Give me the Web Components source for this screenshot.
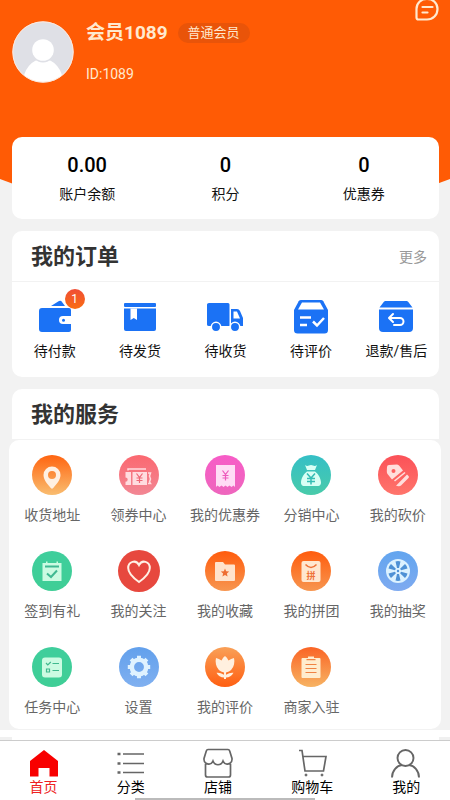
<!DOCTYPE html>
<html lang="zh-CN">
<head>
<meta charset="utf-8">
<meta name="viewport" content="width=device-width, initial-scale=1">
<title>会员中心</title>
<style>
  html, body { margin: 0; }
  body {
    min-height: 100vh; display: flex; flex-direction: column;
    background: #f2f2f2; color: #111;
    font: 14px/20px Roboto, "Noto Sans CJK SC", sans-serif;
  }
  main { flex: 1; }
</style>
</head>
<body>

<template id="t-header">
  <style>
    :host { display: block; height: 192px; box-sizing: border-box; padding: 21px 11px 0 12px; position: relative;
      background: #ff5b05; color: #ffe9cf;
      clip-path: polygon(0 0, 100% 0, 100% 179px, 97% 184px, 92% 100%, 8% 100%, 3% 184px, 0 179px); }
    .row { display: flex; gap: 12px; align-items: flex-start; }
    .avatar { width: 62px; height: 62px; flex: none; }
    .name { display: flex; align-items: center; gap: 10px; height: 24px; }
    h1 { margin: 0; font-size: 19px; line-height: 24px; font-weight: 700; }
    .level { background: #e95409; border-radius: 10px; padding: 0 10px; font-size: 13px; line-height: 20px; }
    .id { margin-top: 19px; font-size: 14px; line-height: 20px; }
    button { position: absolute; right: 11px; top: -3px; width: 24px; height: 24px; padding: 0; border: 0; background: none; color: inherit; }
    svg { display: block; }
  </style>
  <div class="row">
    <svg class="avatar" viewBox="0 0 62 62" role="img" aria-label="头像">
      <defs><clipPath id="c"><circle cx="31" cy="31" r="30"/></clipPath></defs>
      <circle cx="31" cy="31" r="30.500" fill="#dfe0e6"/>
      <g clip-path="url(#c)" fill="#fff"><ellipse cx="31" cy="62" rx="20" ry="24"/><circle cx="31" cy="29" r="12.500" fill="#dfe0e6"/><circle cx="31" cy="29" r="10.800"/></g>
      <circle cx="31" cy="31" r="30.200" fill="none" stroke="#ffe8dc" stroke-width="1"/>
    </svg>
    <div>
      <div class="name"><h1><slot name="name"></slot></h1><span class="level"><slot name="level"></slot></span></div>
      <div class="id"><slot name="uid"></slot></div>
    </div>
  </div>
  <button type="button" aria-label="消息">
    <svg width="24" height="24" viewBox="0 0 24 24" fill="none" stroke="currentColor" stroke-width="2.200" stroke-linecap="round"><path d="M12 2C18 2 22.500 6 22.500 12S18 22.500 12 22.500H3.500Q1.500 22.500 1.500 20.500V12C1.500 6 6 2 12 2ZM7.500 10h10M7.500 15.500h5"/></svg>
  </button>
</template>

<template id="t-stats">
  <style>
    :host { display: flex; position: relative; margin: -55px 11px 12px 12px; padding: 16px 6px 15px; background: #fff; border-radius: 10px; }
    ::slotted(*) { flex: 1; }
  </style>
  <slot></slot>
</template>

<template id="t-stat">
  <style>
    :host { display: block; text-align: center; }
    .num { font-size: 20px; line-height: 24px; font-weight: 500; color: #000; margin-bottom: 7px; }
  </style>
  <div class="num"><slot name="value"></slot></div>
  <div><slot></slot></div>
</template>

<template id="t-panel">
  <style>
    :host { display: block; margin-bottom: 12px; }
    header { display: flex; align-items: center; justify-content: space-between; box-sizing: border-box;
      height: 51px; margin: 0 11px 0 12px; padding: 1px 12px 0 19px; background: #fff;
      border-radius: 10px 10px 0 0; border-bottom: 1px solid #f2f2f2; }
    h2 { margin: 0; font-size: 22px; line-height: 30px; font-weight: 700; color: #333; }
    .body { display: grid; grid-template-columns: repeat(5, 1fr); background: #fff; margin: 0 11px 0 12px;
      padding: 17px 0 16px; border-radius: 0 0 10px 10px; }
    :host([wide]) { margin-bottom: 1px; }
    :host([wide]) .body { margin: 0 9px; padding: 15px 0 12px; row-gap: 26px; border-radius: 10px; }
    ::slotted(a) { color: #999; text-decoration: none; }
  </style>
  <header><h2><slot name="title"></slot></h2><slot name="more"></slot></header>
  <div class="body"><slot></slot></div>
</template>

<template id="t-order">
  <style>
    :host { display: block; }
    a { display: flex; flex-direction: column; align-items: center; gap: 6px; color: #111; text-decoration: none; white-space: nowrap; }
    .pic { position: relative; width: 36px; height: 36px; color: #1b72f5; }
    ::slotted(svg) { display: block; width: 36px; height: 36px; }
    .badge { position: absolute; right: -12px; top: -10px; width: 20px; height: 20px; border-radius: 50%;
      background: linear-gradient(#f04e35, #f96d12); color: #fff; font-size: 12px; line-height: 20px; text-align: center; }
    .badge[hidden] { display: none; }
  </style>
  <a href="#"><span class="pic"><slot name="icon"></slot><span class="badge" hidden></span></span><span><slot></slot></span></a>
</template>

<template id="t-service">
  <style>
    :host { display: block; }
    a { display: flex; flex-direction: column; align-items: center; gap: 10px; color: #666; text-decoration: none; white-space: nowrap; }
    .disc { width: 40px; height: 40px; border-radius: 50%; background: linear-gradient(var(--from), var(--to)); color: var(--ink, #fff0e2); }
    ::slotted(svg) { display: block; width: 40px; height: 40px; overflow: visible; }
  </style>
  <a href="#"><span class="disc"><slot name="icon"></slot></span><span><slot></slot></span></a>
</template>

<template id="t-next">
  <style>
    :host { display: block; background: #f0f0f0; }
    .line { height: 7px; background: #fff; }
    .card { height: 3px; margin: 0 11px 0 12px; background: #fff; }
  </style>
  <div class="line"></div><div class="card"></div>
</template>

<template id="t-tabs">
  <style>
    :host { display: block; position: sticky; bottom: 0; background: #fff; border-top: 1px solid #ccc; }
    nav { display: flex; justify-content: space-around; height: 59px; }
    .home { position: absolute; left: 30%; right: 30%; bottom: 0; height: 2px; background: #bbb; }
  </style>
  <nav><slot></slot></nav><div class="home"></div>
</template>

<template id="t-tab">
  <style>
    :host { display: block; }
    a { display: flex; flex-direction: column; align-items: center; padding-top: 7px; color: #000; text-decoration: none; }
    .label { line-height: 18px; }
    ::slotted(svg) { display: block; width: 30px; height: 30px; margin: 0 -1px; color: #666; }
    :host([current]) a { color: #e22; }
    :host([current]) ::slotted(svg) { color: #f80000; }
  </style>
  <a href="#"><slot name="icon"></slot><span class="label"><slot></slot></span></a>
</template>

<main>
  <member-header>
    <span slot="name">会员1089</span><span slot="level">普通会员</span><span slot="uid">ID:1089</span>
  </member-header>

  <member-stats>
    <member-stat><span slot="value">0.00</span>账户余额</member-stat>
    <member-stat><span slot="value">0</span>积分</member-stat>
    <member-stat><span slot="value">0</span>优惠券</member-stat>
  </member-stats>

  <member-panel>
    <span slot="title">我的订单</span><a slot="more" href="#">更多</a>
    <order-entry badge="1"><svg slot="icon" viewBox="0 0 36 36" fill="currentColor"><path d="M14 7l8-5q2-1 3 1l3 4z"/><path d="M5 9h27q2 0 2 2v6h-8a4 4 0 0 0 0 8h8v6q0 2-2 2H5q-3 0-3-3V12q0-3 3-3z"/><path d="M34 18.500h-7.500a2.800 2.800 0 0 0 0 5.500H34z" fill="#fff"/><circle cx="26.500" cy="21.200" r="1.500"/></svg>待付款</order-entry>
    <order-entry><svg slot="icon" viewBox="0 0 36 36" fill="currentColor"><rect x="2" y="4" width="32" height="4" rx="1"/><path d="M2 9.500h32V30q0 2-2 2H4q-2 0-2-2z"/><path d="M8.500 9.500H15V21l-3.200-2-3.300 2z" fill="#fff"/></svg>待发货</order-entry>
    <order-entry><svg slot="icon" viewBox="0 0 36 36" fill="currentColor"><path d="M2 4h19q1.500 0 1.500 1.500V27H2q-2 0-2-1.500v-20Q0 4 2 4zM24 10h6q2 0 3 2l3 7v8H24z"/><path d="M26.500 12.500H30l3 7h-6.500z" fill="#fff"/><g stroke="#fff" stroke-width="1.500"><circle cx="9" cy="28" r="4.700"/><circle cx="28" cy="28" r="4.700"/></g></svg>待收货</order-entry>
    <order-entry><svg slot="icon" viewBox="0 0 36 36" fill="currentColor"><path d="M8 1h20q1.500 0 2.300 1.300L35 11v20q0 3.500-3.500 3.500h-27Q1 34.500 1 31V11l4.700-8.700Q6.500 1 8 1z"/><path d="M9 3.500h18l4 7H5z" fill="#fff"/><path d="M7 18.500h11M7 26h7M20 22.500l4 4 7-7.500" stroke="#fff" stroke-width="2.500" fill="none"/></svg>待评价</order-entry>
    <order-entry><svg slot="icon" viewBox="0 0 36 36" fill="currentColor"><path d="M7.500 2h21q1 0 1.600.800L34.500 8.500h-33l4.400-5.700Q6.500 2 7.500 2z"/><path d="M1 10.500h34V29q0 4-4 4H5q-4 0-4-4z"/><path d="M15 15l-4 4 4 4M11.500 19H22a3.500 3.500 0 0 1 0 7h-6" stroke="#fff" stroke-width="2" fill="none" stroke-linecap="round" stroke-linejoin="round"/></svg>退款/售后</order-entry>
  </member-panel>

  <member-panel wide>
    <span slot="title">我的服务</span>
    <service-entry style="--from:#ff6410;--to:#f9bd70"><svg slot="icon" viewBox="0 0 40 40"><path fill="currentColor" fill-rule="evenodd" d="M20 11.500a8.500 8.500 0 0 1 8.500 8.500c0 5-4 9-7.300 13q-1.200 1.300-2.400 0C15.500 29 11.500 25 11.500 20a8.500 8.500 0 0 1 8.500-8.500zM20 16a4 4 0 1 0 0 8 4 4 0 0 0 0-8z"/></svg>收货地址</service-entry>
    <service-entry style="--from:#fb6870;--to:#f28794;--ink:#ffdcdf"><svg slot="icon" viewBox="0 0 40 40"><path fill="none" stroke="currentColor" stroke-width="1.500" d="M9 15.500V14h18M29 18h2.500l-1 3 1 3-1 3 1 1.500H29"/><path fill="currentColor" d="M6.500 17H12v13H6.500v-3.200a2.200 2.200 0 0 0 0-4.400zM13.500 17H28v13H13.500z"/><path d="M17.500 18.500l3 4 3-4M20.500 22.500V28M17.500 23h6M17.500 25.500h6" fill="none" stroke="#ee6876" stroke-width="1.200"/></svg>领券中心</service-entry>
    <service-entry style="--from:#f75cc7;--to:#ee66bd;--ink:#ffdcf5"><svg slot="icon" viewBox="0 0 40 40"><path fill="currentColor" d="M11 10h19v22l-1.500-1.500-2 1.500-2-1.500-2 1.500-2-1.500-2 1.500-2-1.500-2 1.500-2-1.500L11 32z"/><path d="M17.500 15.500l3 4 3-4M20.500 19.500v6M17.500 20.500h6M17.500 23h6" fill="none" stroke="#ed5abc" stroke-width="1.200"/></svg>我的优惠券</service-entry>
    <service-entry style="--from:#35bfc6;--to:#49cbaa;--ink:#d9fff5"><svg slot="icon" viewBox="0 0 40 40"><path fill="currentColor" d="M14 10q2 1.500 4 .5t4 0 4-.5l-2 5h-8zM16 16.500h8c3 2 6 7 6 11 0 3-2 3.500-4 3.500H14c-2 0-4-.5-4-3.500 0-4 3-9 6-11z"/><path d="M16 18.500l4 4.500 4-4.500M20 23v6.500M16 23.500h8M16 26.500h8" fill="none" stroke="#35bdb4" stroke-width="1.500"/></svg>分销中心</service-entry>
    <service-entry style="--from:#fb5158;--to:#ff756c;--ink:#ffdedc"><svg slot="icon" viewBox="0 0 40 40"><path fill="currentColor" fill-rule="evenodd" d="M9 12q0-2 2-2l8-.5q1.500 0 2.500 1.500l3.500 4.500-11 9L9.500 19q-.8-1-.7-3zM15.500 14a2 2 0 1 0 0 4 2 2 0 0 0 0-4zM26.500 17l1 1L17 26.500l-1-1zM29 19.500l1.500 1.500q1 1 0 2L23 30.500q-1 1-2.500.8l-2.500-.5z"/></svg>我的砍价</service-entry>

    <service-entry style="--from:#3fce9c;--to:#3fce96;--ink:#cbfbe2"><svg slot="icon" viewBox="0 0 40 40"><path fill="currentColor" d="M10.500 12H14v-1.500h1.500V12h9v-1.500H26V12h3.500v18h-19z"/><path d="M13 15.500h14M15 22.500l4 3.500 6-6.500" fill="none" stroke="#3fb992" stroke-width="2"/></svg>签到有礼</service-entry>
    <service-entry style="--from:#e7483e;--to:#e7483e;--ink:#fff1e5"><svg slot="icon" viewBox="0 0 40 40"><circle cx="20" cy="20" r="21" fill="#e7483e"/><path d="M20 31C13 26 9.200 21.500 9.200 17c0-6.500 7.800-8.800 10.800-3 3-5.800 10.800-3.500 10.800 3 0 4.500-3.800 9-10.800 14z" fill="none" stroke="currentColor" stroke-width="2"/></svg>我的关注</service-entry>
    <service-entry style="--from:#ff5c0d;--to:#f79650;--ink:#ffe3cc"><svg slot="icon" viewBox="0 0 40 40"><path fill="currentColor" d="M10 12q0-1 1-1h7l2 2.500h9q1 0 1 1V29q0 1-1 1H11q-1 0-1-1z"/><path fill="#ee6d32" d="M20 17.500l1.200 2.700 3 .3-2.300 2 .7 3-2.600-1.600-2.600 1.600.7-3-2.300-2 3-.3z"/></svg>我的收藏</service-entry>
    <service-entry style="--from:#ff5c0d;--to:#f79650;--ink:#ffe7cf"><svg slot="icon" viewBox="0 0 40 40"><rect fill="currentColor" x="10.500" y="10" width="19" height="21" rx="2"/><path d="M14.500 13.500q5.500 6 11 0" fill="none" stroke="#ef7338" stroke-width="1.500"/><text x="20" y="28" font-size="9" font-weight="700" text-anchor="middle" fill="#ef7338">拼</text></svg>我的拼团</service-entry>
    <service-entry style="--from:#62a5ef;--to:#7eaaf0;--ink:#dcf2ff"><svg slot="icon" viewBox="0 0 40 40"><circle cx="20" cy="20" r="12" fill="currentColor"/><g fill="#4e91d5"><path id="w" d="M17.500 10.500q2.500-.9 5 0L21 17h-2z"/><use href="#w" transform="rotate(60 20 20)"/><use href="#w" transform="rotate(120 20 20)"/><use href="#w" transform="rotate(180 20 20)"/><use href="#w" transform="rotate(240 20 20)"/><use href="#w" transform="rotate(300 20 20)"/><circle cx="20" cy="20" r="1.200"/></g></svg>我的抽奖</service-entry>

    <service-entry style="--from:#3fce9c;--to:#3fce96;--ink:#cbfbe2"><svg slot="icon" viewBox="0 0 40 40"><rect fill="currentColor" x="10" y="10.500" width="20" height="20" rx="3"/><path d="M14 16l1.800 2 3-3M20.500 16.500H27M20.500 23.500H27M14.500 22h3v3h-3z" fill="none" stroke="#3fb98e" stroke-width="1.200"/></svg>任务中心</service-entry>
    <service-entry style="--from:#62a0ec;--to:#80b0f0;--ink:#dff2ff"><svg slot="icon" viewBox="0 0 40 40"><circle cx="20" cy="20" r="7.200" fill="none" stroke="currentColor" stroke-width="4.500"/><g stroke="currentColor" stroke-width="4"><path d="M20 8.800v3.500M20 27.700v3.500M8.800 20h3.500M27.700 20h3.500M12.100 12.100l2.500 2.500M25.400 25.400l2.500 2.500M27.900 12.100l-2.500 2.500M14.600 25.400l-2.500 2.500"/></g></svg>设置</service-entry>
    <service-entry style="--from:#f9a057;--to:#ff5f12;--ink:#fff0df"><svg slot="icon" viewBox="0 0 40 40"><path fill="currentColor" d="M20 9q2 1 3.500 4.500Q26 11.500 29 11q.8 3 0 6.500Q27.500 24 21 25.500v2.300q4-2.600 7.500-2Q26 30.500 21 30.500V32h-2v-1.500q-5 0-7.500-4.700 3.500-.6 7.500 2v-2.300Q12.500 24 11 17.500q-.8-3.500 0-6.500 3 .5 5.500 2.500Q18 10 20 9z"/></svg>我的评价</service-entry>
    <service-entry style="--from:#fa6425;--to:#f7b363;--ink:#ffedce"><svg slot="icon" viewBox="0 0 40 40"><path fill="currentColor" d="M17 9.500h6V11h5.500q1 0 1 1v18q0 1-1 1h-17q-1 0-1-1V12q0-1 1-1H17z"/><path d="M15.500 12.700h9M14.500 17.500h11M14.500 21.500h11M14.500 25.500h11" stroke="#f08343" stroke-width="1.200"/></svg>商家入驻</service-entry>
  </member-panel>

  <next-section></next-section>
</main>

<tab-bar>
  <tab-item current><svg slot="icon" viewBox="0 0 30 30"><path fill="currentColor" d="M15 2l14 11v15.500h-8.500V20h-11v8.500H1V13z"/></svg>首页</tab-item>
  <tab-item><svg slot="icon" viewBox="0 0 30 30" fill="none" stroke="currentColor" stroke-width="1.600"><path d="M7 6h21M7 15.500h21M7 24.500h21"/><path d="M1.500 6h3M1.500 15.500h3M1.500 24.500h3" stroke-width="2.500"/></svg>分类</tab-item>
  <tab-item><svg slot="icon" viewBox="0 0 30 30" fill="none" stroke="currentColor" stroke-width="1.700"><path d="M5 1.500h20q1.200 0 1.700 1.500L29 10.500c.5 6-7 7.500-9 2.500-2 5-8 5-10 0-2 5-9.500 3.500-9-2.500L3.300 3Q3.800 1.500 5 1.500zM2.500 16v11q0 2 2 2h21q2 0 2-2V16"/></svg>店铺</tab-item>
  <tab-item><svg slot="icon" viewBox="0 0 30 30" fill="none" stroke="currentColor" stroke-width="1.700"><path d="M2 2.500h3L8 23h18.500L29 8.500H6"/><circle cx="9" cy="27" r="1" fill="currentColor" stroke-width="1"/><circle cx="25" cy="27" r="1" fill="currentColor" stroke-width="1"/></svg>购物车</tab-item>
  <tab-item><svg slot="icon" viewBox="0 0 30 30" fill="none" stroke="currentColor" stroke-width="1.900"><circle cx="14.500" cy="10" r="8"/><path d="M1 29.500c0-7 5-12 10-12.500M28 29.500c0-7-5-12-10-12.500"/></svg>我的</tab-item>
</tab-bar>

<script>
  class TemplateElement extends HTMLElement {
    constructor() {
      super();
      const source = document.getElementById(this.constructor.template);
      this.attachShadow({ mode: "open" }).append(source.content.cloneNode(true));
    }
  }
  class MemberHeader extends TemplateElement { static template = "t-header"; }
  class MemberStats extends TemplateElement { static template = "t-stats"; }
  class MemberStat extends TemplateElement { static template = "t-stat"; }
  class MemberPanel extends TemplateElement { static template = "t-panel"; }
  class OrderEntry extends TemplateElement {
    static template = "t-order";
    connectedCallback() {
      const count = this.getAttribute("badge");
      const badge = this.shadowRoot.querySelector(".badge");
      badge.hidden = !count;
      badge.textContent = count || "";
    }
  }
  class ServiceEntry extends TemplateElement { static template = "t-service"; }
  class NextSection extends TemplateElement { static template = "t-next"; }
  class TabBar extends TemplateElement { static template = "t-tabs"; }
  class TabItem extends TemplateElement { static template = "t-tab"; }

  customElements.define("member-header", MemberHeader);
  customElements.define("member-stats", MemberStats);
  customElements.define("member-stat", MemberStat);
  customElements.define("member-panel", MemberPanel);
  customElements.define("order-entry", OrderEntry);
  customElements.define("service-entry", ServiceEntry);
  customElements.define("next-section", NextSection);
  customElements.define("tab-bar", TabBar);
  customElements.define("tab-item", TabItem);
</script>
</body>
</html>
